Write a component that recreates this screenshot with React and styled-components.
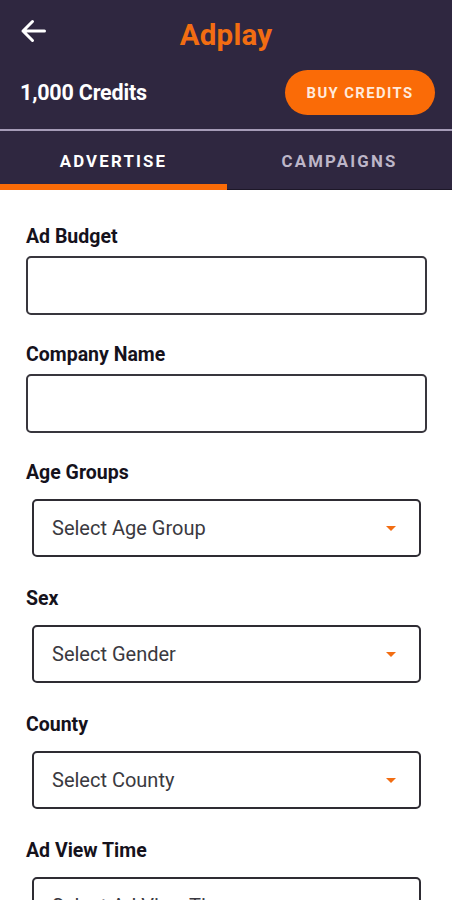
import React from "react";
import styled, { createGlobalStyle } from "styled-components";

const Global = createGlobalStyle`
  html, body { margin: 0; padding: 0; background: #ffffff; }
  body { font-family: Roboto, "Liberation Sans", Arial, sans-serif; }
  * { box-sizing: border-box; }
`;

const Page = styled.div`
  width: 452px;
  height: 900px;
  overflow: hidden;
  background: #ffffff;
`;

const Header = styled.header`
  background: #2f2740;
`;

const TopBar = styled.div`
  height: 66px;
  display: grid;
  grid-template-columns: 1fr auto 1fr;
  align-items: center;
  padding: 0 20px;
`;

const BackButton = styled.button`
  justify-self: start;
  background: none;
  border: 0;
  padding: 0;
  margin-top: -4px;
  width: 26px;
  height: 24px;
  display: flex;
  cursor: pointer;
`;

const Title = styled.h1`
  margin: 0;
  margin-top: 4px;
  font-size: 29.5px;
  font-weight: 700;
  color: #f26d12;
  letter-spacing: 0.2px;
`;

const CreditsRow = styled.div`
  display: flex;
  align-items: center;
  justify-content: space-between;
  padding: 4px 17px 14px 20px;
  border-bottom: 2px solid #a69cb8;
`;

const Credits = styled.span`
  color: #ffffff;
  font-size: 21.5px;
  font-weight: 700;
  letter-spacing: -0.2px;
`;

const BuyButton = styled.button`
  width: 150px;
  height: 45px;
  border: 0;
  border-radius: 23px;
  background: #fa6b07;
  color: #ffe9dc;
  font-family: Roboto, "Liberation Sans", Arial, sans-serif;
  font-size: 14.8px;
  font-weight: 700;
  letter-spacing: 1.4px;
  cursor: pointer;
`;

const Tabs = styled.nav`
  display: grid;
  grid-template-columns: 227px 1fr;
  height: 59px;
`;

const Tab = styled.div`
  display: flex;
  align-items: center;
  justify-content: center;
  font-size: 16.8px;
  font-weight: 700;
  letter-spacing: 2.2px;
  color: ${(p) => (p.$active ? "#ffffff" : "#bdb6c8")};
  border-bottom: ${(p) => (p.$active ? "6px solid #fa6b07" : "1px solid #1d1728")};
  padding-top: ${(p) => (p.$active ? "6px" : "1px")};
`;

const Form = styled.form`
  display: flex;
  flex-direction: column;
  padding: 36px 25px 0 26px;
`;

const Field = styled.div`
  display: flex;
  flex-direction: column;
  margin-bottom: ${(p) => (p.$select ? "31px" : "29px")};
`;

const Label = styled.label`
  font-size: 19.5px;
  line-height: 22px;
  font-weight: 700;
  color: #15121c;
  margin-bottom: ${(p) => (p.$select ? "15px" : "8px")};
`;

const TextInput = styled.input`
  height: 59px;
  width: 100%;
  border: 2px solid #38363d;
  border-radius: 5px;
  background: #fff;
  font-size: 19px;
  padding: 0 16px;
  outline: none;
`;

const SelectBox = styled.div`
  height: 58px;
  margin: 0 6px;
  border: 2px solid #2e2c33;
  border-radius: 5px;
  display: flex;
  align-items: center;
  justify-content: space-between;
  padding: 0 23px 0 18px;
  cursor: pointer;
`;

const Placeholder = styled.span`
  font-size: 20px;
  color: #3a3940;
`;

const Caret = styled.span`
  width: 0;
  height: 0;
  border-left: 5.5px solid transparent;
  border-right: 5.5px solid transparent;
  border-top: 5.5px solid #f26d12;
`;

const BackArrow = () => (
  <svg width="26" height="24" viewBox="0 0 26 24" fill="none">
    <path
      d="M24.5 12H3 M12.5 2.5L3 12l9.5 9.5"
      stroke="#ffffff"
      strokeWidth="3"
      strokeLinecap="round"
      strokeLinejoin="round"
    />
  </svg>
);

const selects = [
  ["Age Groups", "Select Age Group"],
  ["Sex", "Select Gender"],
  ["County", "Select County"],
  ["Ad View Time", "Select Ad View Time"],
];

export default function App() {
  return (
    <Page>
      <Global />
      <Header>
        <TopBar>
          <BackButton aria-label="Back">
            <BackArrow />
          </BackButton>
          <Title>Adplay</Title>
          <span />
        </TopBar>
        <CreditsRow>
          <Credits>1,000 Credits</Credits>
          <BuyButton>BUY CREDITS</BuyButton>
        </CreditsRow>
        <Tabs>
          <Tab $active>ADVERTISE</Tab>
          <Tab>CAMPAIGNS</Tab>
        </Tabs>
      </Header>
      <Form>
        <Field>
          <Label>Ad Budget</Label>
          <TextInput />
        </Field>
        <Field>
          <Label>Company Name</Label>
          <TextInput />
        </Field>
        {selects.map(([label, ph]) => (
          <Field key={label} $select>
            <Label $select>{label}</Label>
            <SelectBox>
              <Placeholder>{ph}</Placeholder>
              <Caret />
            </SelectBox>
          </Field>
        ))}
      </Form>
    </Page>
  );
}
